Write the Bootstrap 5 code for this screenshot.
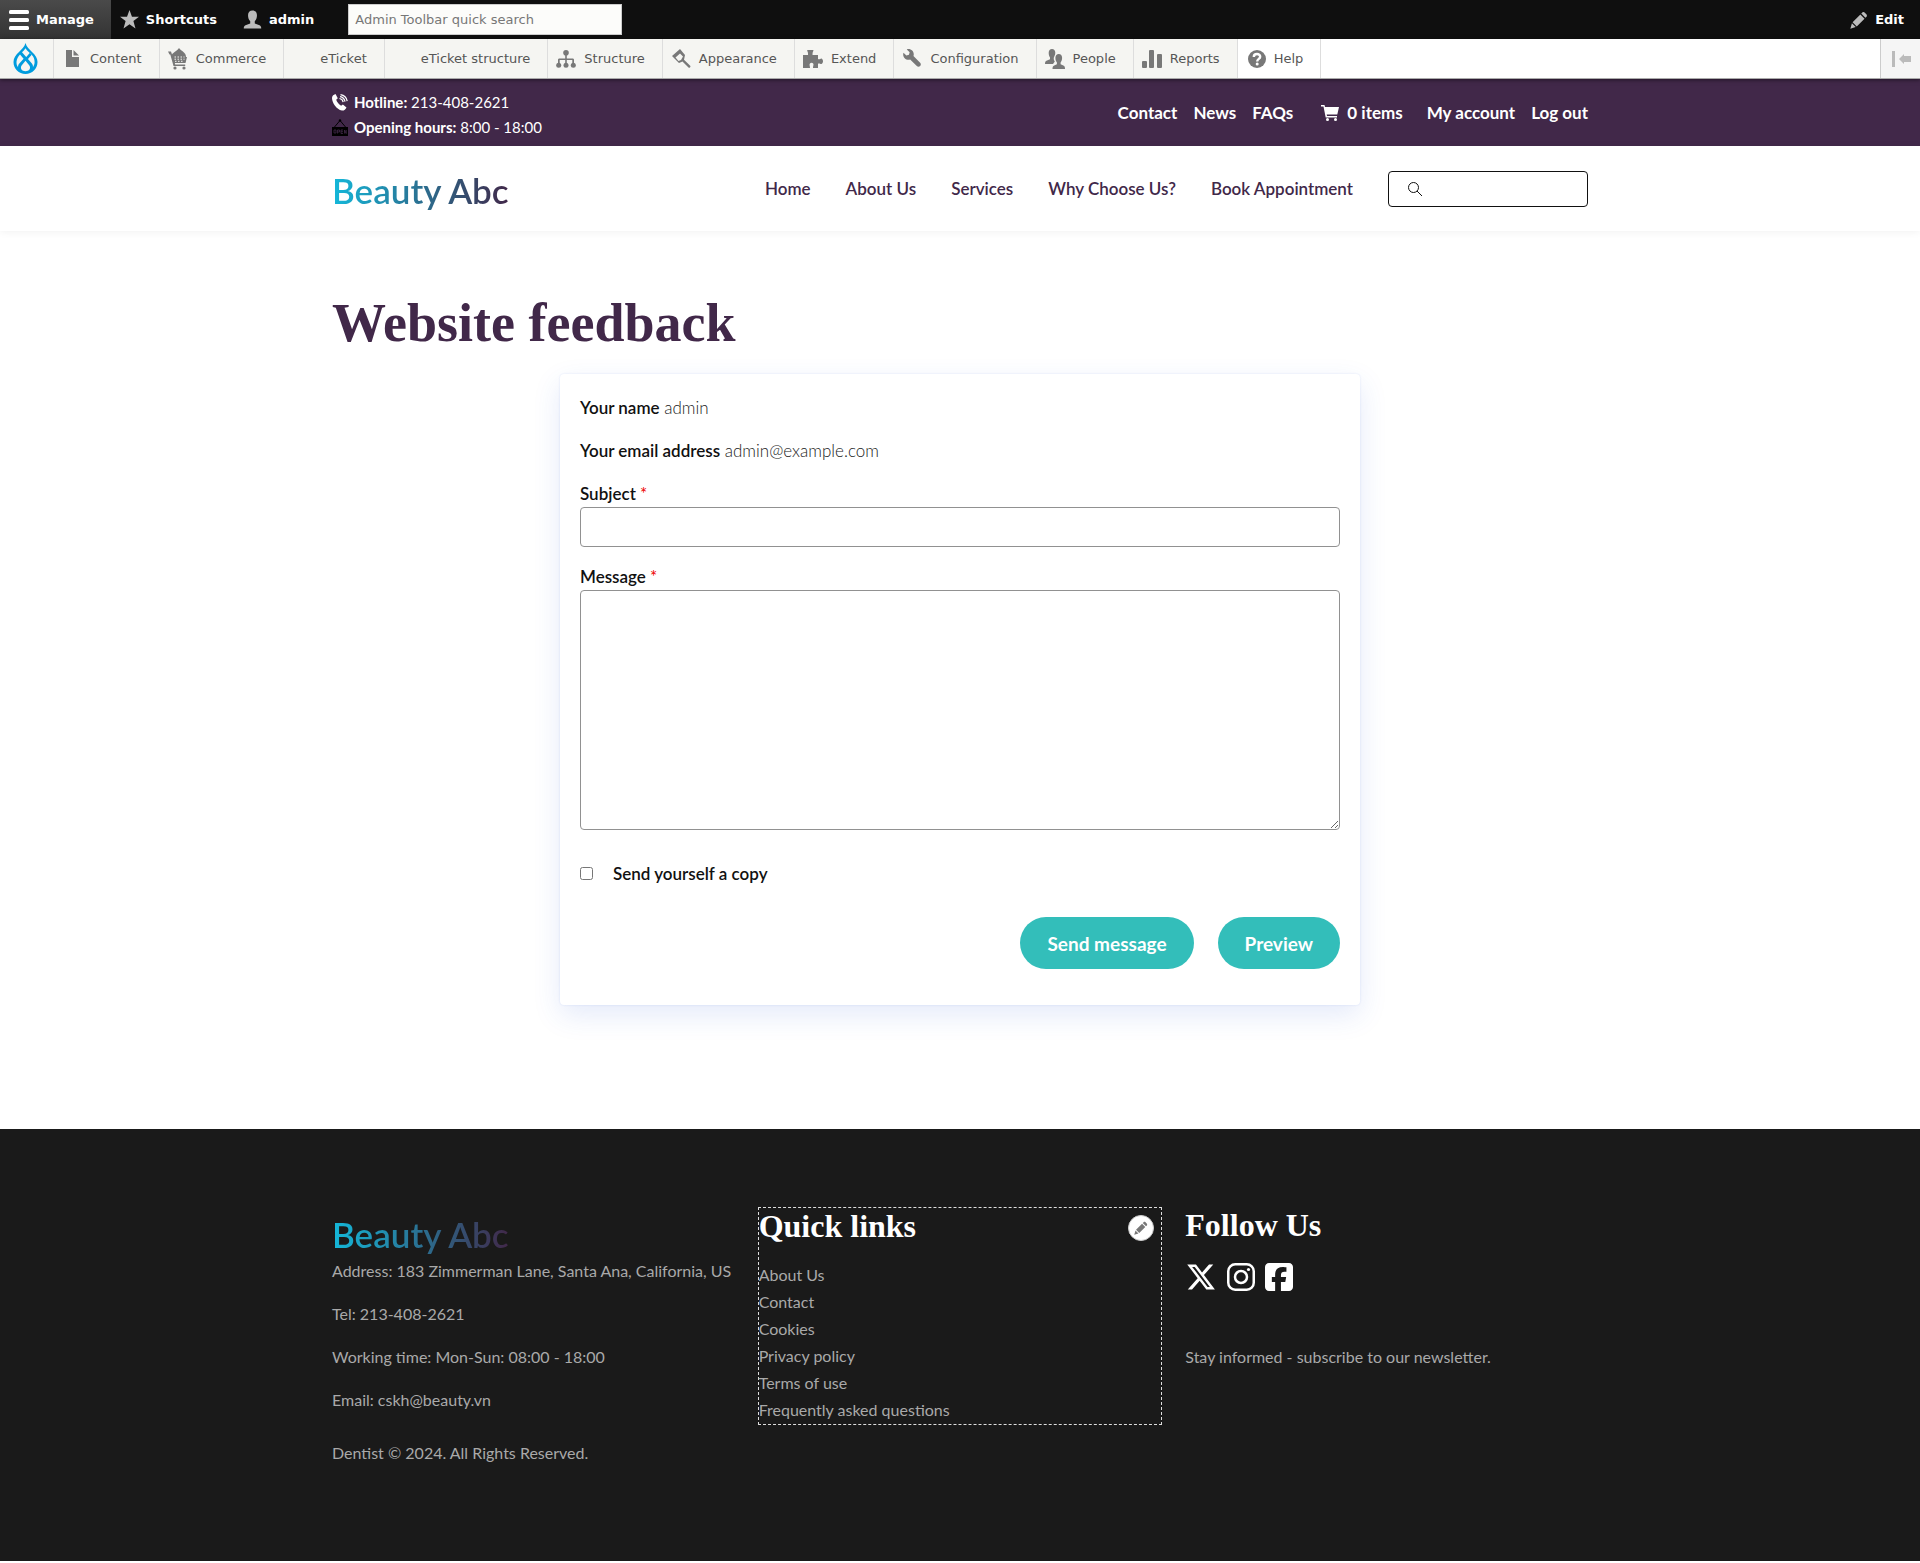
<!DOCTYPE html>
<html lang="en">
<head>
<meta charset="utf-8">
<meta name="viewport" content="width=device-width, initial-scale=1">
<title>Website feedback | Beauty Abc</title>
<link rel="stylesheet" href="https://cdn.jsdelivr.net/npm/bootstrap@5.3.0/dist/css/bootstrap.min.css">
<style>
:root { --plum: #412849; --teal: #33beba; }
body { font-family: Lato, "Open Sans", sans-serif; font-size: 16px; line-height: 27px; color: #1a1a1a; background: #fff; }
a { text-decoration: none; color: inherit; }
svg { display: block; flex: none; }
.site-width { max-width: 1280px; }

/* admin bar */
.admin-bar { background: #0f0f0f; color: #fff; height: 39px; font: bold 13px/39px "DejaVu Sans", sans-serif; }
.admin-bar a { display: flex; align-items: center; gap: 7px; color: #fff; height: 39px; }
.admin-bar .ic { fill: #bbb; }
.admin-bar .tab-manage { background: linear-gradient(#4a4a4a, #333); padding: 0 17px 0 9px; }
.admin-bar .tab-manage svg { fill: #fff; }
.admin-bar .tab-short { padding: 0 14px 0 9px; }
.admin-bar .tab-user { padding: 0 12px; }
.admin-find { width: 274px; height: 31px; margin-left: 22px; border: 1px solid #ccc; border-radius: 0; padding: 0 6px; background: #fcfcfa; font: 13px "DejaVu Sans", sans-serif; }
.admin-find::placeholder { color: #777; opacity: 1; }
.admin-tray { position: relative; z-index: 2; height: 40px; background: #fff; border-bottom: 1px solid #aaa; box-shadow: 0 1px 4px rgba(0,0,0,.5); font: 13px/39px "DejaVu Sans", sans-serif; }
.admin-tray a { display: flex; align-items: center; height: 39px; padding: 0 17px 0 8px; gap: 8px; color: #565656; background: #f5f5f2; border-right: 1px solid #ddd; }
.admin-tray a.tray-logo { padding: 0 15px 0 13px; }
.admin-tray a.no-ic { padding-left: 36px; }
.admin-tray a.on-white { background: #fff; }
.admin-tray svg { fill: #787878; }
.tray-flip { width: 40px; background: #f5f5f5; border: 0; border-left: 1px solid #ccc; padding: 0 0 0 11px; }
.tray-flip svg { fill: #bbb; }

/* site header */
.top-strip { background: var(--plum); color: #fff; height: 67px; font-size: 15px; line-height: 25px; }
.top-links a { font-weight: 700; font-size: 17px; color: #fff; }
.top-lines > div { display: flex; align-items: center; gap: 6px; }
.main-nav { height: 85px; box-shadow: 0 1px 8px rgba(0,0,0,.06); }
.main-nav .nav-items { gap: 35px; }
.main-nav .nav-items a { color: var(--plum); font-weight: 600; font-size: 17px; }
.brand { display: block; width: fit-content; font-size: 35px; line-height: 44px; font-weight: 600; color: transparent; background: linear-gradient(90deg, #14b8da, #412849); -webkit-background-clip: text; background-clip: text; }
.main-nav .brand { padding-top: 3px; }
.site-find { width: 200px; height: 36px; border: 1px solid #111; border-radius: 4px; padding-left: 18px; }
.site-find input { border: 0; outline: 0; min-width: 0; background: transparent; }

h1, h2 { font-family: "Liberation Serif", serif; font-weight: 700; }
h1 { font-size: 54px; line-height: 68px; color: var(--plum); margin: 0; }
.page-main { padding-top: 58px; padding-bottom: 124px; }

/* feedback form */
.feedback { max-width: 800px; margin: 17px auto 0; padding: 20px 20px 36px; background: #fff; border-radius: 4px; font-size: 17px; box-shadow: 0 0 2px rgba(50,90,220,.15), 0 10px 28px rgba(50,90,220,.13); }
.feedback p { margin-bottom: 16px; color: #222; font-weight: 300; }
.feedback b, .feedback label { font-weight: 600; color: #111; }
.feedback label { display: block; line-height: 27px; }
.feedback .req { color: #e00; font-weight: 400; }
.feedback .field { display: block; width: 100%; border: 1px solid #919191; border-radius: 4px; background: #fff; margin-bottom: 16px; }
.feedback input.field { height: 40px; }
.feedback textarea.field { height: 240px; margin-bottom: 30px; }
.feedback .copy-row { gap: 20px; margin-bottom: 30px; }
.feedback .copy-row input { width: 13px; height: 13px; }
.pill { border: 0; border-radius: 26px; height: 52px; padding: 0 27px; background: var(--teal); color: #fff; font-weight: 700; font-size: 19px; }

/* footer */
.site-footer { background: #1a1a1a; color: #a9a9a9; padding: 78px 0 95px; }
.site-footer .brand { margin: 5px 0 1px; }
.site-footer p { margin-bottom: 16px; }
.site-footer .last-line { margin-top: 26px; }
.site-footer h2 { font-size: 32px; line-height: 36px; color: #fff; margin: 0; }
.quick { position: relative; border: 1px dashed #ddd; margin: 0 -1px; padding-bottom: 1px; }
.quick ul { margin: 17px 0 0; }
.quick-edit { position: absolute; right: 7px; top: 7px; width: 26px; height: 26px; border: 1px solid #ccc; border-radius: 50%; background: #fff; padding: 0 0 0 5px; }
.socials { margin: 20px 0 52px; gap: 10px; }
</style>
<script src="https://cdn.jsdelivr.net/npm/bootstrap@5.3.0/dist/js/bootstrap.bundle.min.js"></script>
</head>
<body>
<nav class="admin-bar d-flex align-items-center" aria-label="Administration">
  <a class="tab-manage" href="#"><svg width="20" height="20" viewBox="0 0 20 20"><rect y="0" width="20" height="4" rx="1.500"/><rect y="8" width="20" height="4" rx="1.500"/><rect y="16" width="20" height="4" rx="1.500"/></svg>Manage</a>
  <a class="tab-short" href="#"><svg class="ic" width="19" height="19" viewBox="0 0 20 20"><path d="M10 0l2.600 7H20l-5.900 4.700L16.300 19.500 10 15l-6.300 4.500L5.900 11.700 0 7h7.400z"/></svg>Shortcuts</a>
  <a class="tab-user" href="#"><svg class="ic" width="19" height="20" viewBox="0 0 20 20"><path d="M10 0c3 0 4.700 2 4.700 5 0 2.700-.8 4.900-2.300 6.300v2.300l5 2c1.200.5 1.800 1.600 1.800 3.400H.8c0-1.800.6-2.900 1.800-3.400l5-2v-2.300C6.100 9.900 5.300 7.700 5.300 5c0-3 1.700-5 4.700-5z"/></svg>admin</a>
  <input class="admin-find" type="search" aria-label="Admin Toolbar quick search" placeholder="Admin Toolbar quick search">
  <a class="ms-auto pe-3" href="#"><svg class="ic" width="18" height="18" viewBox="0 0 16 16"><path d="M14.500 2.800L13.200 1.500c-.7-.8-1.700-.7-2.200-.2l-1 1L13.700 6l1-1c.5-.6.500-1.500-.2-2.200zM9.200 3.100L2.300 10l3.700 3.700 6.900-6.900zM1.700 10.900L.3 15.700l4.800-1.400z"/></svg>Edit</a>
</nav>
<nav class="admin-tray d-flex" aria-label="Manage menu">
  <a class="tray-logo" href="#" aria-label="Drupal"><svg width="25" height="31" viewBox="0 0 25 31"><path style="fill:#009cde" d="M12.500 0c1 4.200 4 6.300 6.500 9 3.300 3.200 5.500 6 5.500 10 0 6.700-5.300 12-12 12s-12-5.300-12-12c0-4 2.200-6.800 5.500-10 2.500-2.700 5.500-4.800 6.500-9z"/><g style="fill:#f5f5f2"><path d="M12.500 5.200c1.700 2.700 4.200 4.600 6.100 6.600 2 2.100 3 4.400 3 7.200 0 2-.6 3.800-1.700 5.300.200-1.300-.1-2.500-1-3.700L9 9.300c1.300-1.300 2.500-2.500 3.500-4.100z"/><path d="M7 11.500l3.600 4.200-4.500 5c-.8 1.100-1.200 2.300-1 3.600-2.300-3-2.400-8.500 1.900-12.800zM12.500 17.800l3.700 4.500c2.200 3-.2 6-3.700 6s-5.900-3-3.700-6z"/></g><path fill="none" style="fill:none;stroke:#009cde;stroke-width:2.600" d="M17.700 10.800l-5.200 6"/></svg></a>
  <a href="#"><svg width="20" height="17" viewBox="-4 0 20 17"><path d="M0 0h6v7h7v10H0z"/><path d="M7.500 0L13 5.500H7.500z"/></svg>Content</a>
  <a href="#"><svg width="20" height="22" viewBox="0 0 20 22"><path d="M0 3.500h3l1 3C5 4.500 8.500 3.500 11 0c2.500 3.500 7 4 7 9h1l-1.500 6H6.800l.4 1.500h10V18H5.500L2.300 6.500H1.500z"/><circle cx="7" cy="20" r="1.600"/><circle cx="16" cy="20" r="1.600"/><path fill="none" stroke="#f5f5f2" stroke-width="1" stroke-dasharray="1.500 1.500" d="M6.500 9h10M6.500 11.200h10M7 13.300h9"/></svg>Commerce</a>
  <a class="no-ic" href="#">eTicket</a>
  <a class="no-ic" href="#">eTicket structure</a>
  <a href="#"><svg width="20" height="18" viewBox="0 0 20 18"><circle cx="10" cy="2.800" r="2.800"/><path d="M9.200 4h1.600v4.500h5.700c1 0 1.500.5 1.500 1.500V14h-1.700v-4h-5.500v4H9.200v-4H3.700v4H2v-4c0-1 .5-1.500 1.500-1.500h5.700z"/><circle cx="2.700" cy="15.300" r="2.500"/><circle cx="10" cy="15.300" r="2.500"/><circle cx="17.300" cy="15.300" r="2.500"/></svg>Structure</a>
  <a href="#"><svg width="20" height="19" viewBox="-1 0 20 19"><path fill-rule="evenodd" d="M8 0L0 7l7 7 3.500-1.500 6 6c1.200.7 2.500-.6 1.700-1.800l-6.200-6L13 6zM8 4.500L11 7.500 9 11 6.500 12 3.500 8.500z"/></svg>Appearance</a>
  <a href="#"><svg width="20" height="18" viewBox="0 0 20 18"><path d="M4.500 0h5.700c.3 0 .3.500.2.800-.7 1.200-1.100 2.500-.8 4.200H15v4c1.500 1 2.500-.9 3.500-.5 2 1 2 4.500 0 5.500-1 .5-2-1.300-3.500-.3V18h-5c0-2 .8-3.200.3-4.200-.8-1.300-2.700-1.300-3.500 0C6.200 15 7 16 7 18H0V5h5c.2-1.700-.1-3-.8-4.200-.1-.3 0-.8.3-.8z"/></svg>Extend</a>
  <a href="#"><svg width="20" height="19" viewBox="-1 0 17 16"><path d="M14.416 11.586L8.750 5.921c.15-.449.252-.921.252-1.421 0-2.485-2.016-4.500-4.502-4.500-.505 0-.981.102-1.434.255l2.431 2.431-.588 2.196-2.196.588L.268 3.025C.106 3.489 0 3.981 0 4.500 0 6.986 2.014 9 4.500 9c.5 0 .972-.102 1.421-.251l5.667 5.665c.781.781 2.047.781 2.828 0s.781-2.047 0-2.828z"/></svg>Configuration</a>
  <a href="#"><svg width="20" height="20" viewBox="0 0 20 20"><path d="M7 0c2 0 3.300 1.500 3.300 3.800 0 1.200-.3 2.300-.8 3.200-1.300 2-.8 4 .3 5.500L8 15H0c0-2 .4-3 2-3.500l3-1.300V8.500C4.200 7.500 3.700 6 3.700 3.800 3.700 1.500 5 0 7 0z"/><path d="M13.800 5c2 0 3.300 1.500 3.300 3.800 0 2-.6 3.700-1.500 4.700v1.700l2.700 1.200c1.400.6 1.700 1.600 1.700 3.600H7.500c0-2 .4-3 1.700-3.600l2.700-1.200v-1.700c-.9-1-1.500-2.700-1.500-4.700C10.400 6.500 11.800 5 13.800 5z"/></svg>People</a>
  <a href="#"><svg width="20" height="18" viewBox="0 0 20 18"><rect y="11" width="5" height="7" rx="1"/><rect x="7" width="5" height="18" rx="1"/><rect x="15" y="4" width="5" height="14" rx="1"/></svg>Reports</a>
  <a class="on-white" href="#"><svg width="20" height="18" viewBox="-2 0 20 18"><circle cx="9" cy="9" r="9"/><path style="fill:none" stroke="#fff" stroke-width="2.400" d="M5.800 7C5.800 3 12.200 3.200 12.200 6.700 12.200 9 9.200 8.800 9.200 11.500"/><circle cx="9.200" cy="14" r="1.500" style="fill:#fff"/></svg>Help</a>
  <button class="tray-flip ms-auto" type="button" aria-label="Vertical orientation"><svg width="19" height="16" viewBox="0 0 19 16"><rect width="3" height="16"/><path d="M7 8l5-5v2h7v6h-7v2z"/></svg></button>
</nav>

<header>
  <div class="top-strip">
    <div class="container-fluid site-width h-100 d-flex justify-content-between align-items-center">
      <div class="top-lines pt-1">
        <div><svg width="16" height="17" viewBox="0 0 16 17" fill="#fff"><path d="M3.500 0l2.300 4.300-1.600 1.500c.8 2.500 2.500 4.500 4.900 5.900l1.800-1.200 3.600 3c-1 2.200-2.500 3.300-4.600 3.100C4.600 15.300.2 9.400 0 4 0 2 1.300.8 3.500 0z"/><path fill="none" stroke="#fff" stroke-width="1.200" d="M7.500 4.500c2 .3 3.300 1.600 3.700 3.700M8 2.600c2.600.4 4.500 2.300 5 5M8.500.7c3.500.5 6.100 3 6.700 6.500"/></svg><span><b>Hotline:</b> 213-408-2621</span></div>
        <div><svg width="16" height="17" viewBox="0 0 16 17"><path d="M0 8h16v9H0z"/><path fill="none" stroke="#000" d="M2.500 8L8 1.500 13.500 8"/><circle cx="8" cy="1.500" r="1.200"/><path fill="none" stroke="#412849" stroke-width=".8" d="M2 11h2v3H2zM5.500 14.500V11h2v2h-2M11 11H9v3.500h2M9 12.700h2M12.500 14.500V11l1.700 3.500V11"/></svg><span><b>Opening hours:</b> 8:00 - 18:00</span></div>
      </div>
      <nav class="top-links d-flex align-items-center" aria-label="Account">
        <a href="#">Contact</a><a class="ms-3" href="#">News</a><a class="ms-3" href="#">FAQs</a>
        <a class="d-flex align-items-center gap-2 ms-4 ps-1 me-4" href="#"><svg width="18" height="16" viewBox="0 0 18 16" fill="#fff"><path d="M0 0h3.500l.5 2h14l-1.700 7.500H5.700l.3 1.500h10v1.500H4.700L2.500 1.500H0z"/><circle cx="6.500" cy="14.500" r="1.500"/><circle cx="14.500" cy="14.500" r="1.500"/></svg>0 items</a>
        <a href="#">My account</a><a class="ms-3" href="#">Log out</a>
      </nav>
    </div>
  </div>
  <div class="main-nav">
    <div class="container-fluid site-width h-100 d-flex align-items-center justify-content-between">
      <a class="brand" href="#">Beauty Abc</a>
      <nav class="nav-items d-flex align-items-center" aria-label="Main">
        <a href="#">Home</a><a href="#">About Us</a><a href="#">Services</a><a href="#">Why Choose Us?</a><a href="#">Book Appointment</a>
        <form class="site-find d-flex align-items-center gap-2"><label for="find" aria-label="Search"><svg width="16" height="16" viewBox="0 0 16 16" fill="none" stroke="#111"><circle cx="6.500" cy="6.500" r="5"/><path d="M10 10l5 5"/></svg></label><input id="find" type="search"></form>
      </nav>
    </div>
  </div>
</header>

<main class="page-main container-fluid site-width">
  <h1>Website feedback</h1>
  <form class="feedback">
    <p><b>Your name</b> admin</p>
    <p><b>Your email address</b> admin@example.com</p>
    <label for="subject">Subject <span class="req">*</span></label>
    <input class="field" id="subject" type="text">
    <label for="message">Message <span class="req">*</span></label>
    <textarea class="field" id="message"></textarea>
    <div class="copy-row d-flex align-items-center"><input id="copy" type="checkbox"><label for="copy">Send yourself a copy</label></div>
    <div class="d-flex justify-content-end gap-4"><button class="pill" type="button">Send message</button><button class="pill" type="button">Preview</button></div>
  </form>
</main>

<footer class="site-footer">
  <div class="container-fluid site-width">
    <div class="row">
      <div class="col-4">
        <a class="brand" href="#">Beauty Abc</a>
        <p>Address: 183 Zimmerman Lane, Santa Ana, California, US</p>
        <p>Tel: 213-408-2621</p>
        <p>Working time: Mon-Sun: 08:00 - 18:00</p>
        <p>Email: cskh@beauty.vn</p>
        <p class="last-line mb-0">Dentist © 2024. All Rights Reserved.</p>
      </div>
      <div class="col-4">
        <section class="quick">
          <h2>Quick links</h2>
          <button class="quick-edit" type="button" aria-label="Configure block"><svg width="14" height="14" viewBox="0 0 16 16" fill="#787878"><path d="M14.500 2.800L13.200 1.500c-.7-.8-1.700-.7-2.200-.2l-1 1L13.700 6l1-1c.5-.6.500-1.500-.2-2.200zM9.200 3.100L2.300 10l3.700 3.700 6.900-6.900zM1.700 10.900L.3 15.700l4.800-1.400z"/></svg></button>
          <ul class="list-unstyled">
            <li><a href="#">About Us</a></li><li><a href="#">Contact</a></li><li><a href="#">Cookies</a></li><li><a href="#">Privacy policy</a></li><li><a href="#">Terms of use</a></li><li><a href="#">Frequently asked questions</a></li>
          </ul>
        </section>
      </div>
      <div class="col-4">
        <h2>Follow Us</h2>
        <div class="socials d-flex">
          <a href="#" aria-label="X"><svg width="32" height="28" viewBox="-10 32 532 448" fill="#fff"><path d="M389.200 48h70.600L305.600 224.200 487 464H345L233.700 318.600 106.500 464H35.800L200.700 275.500 26.800 48H172.400L272.900 180.900zM364.400 421.800h39.100L151.100 88h-42z"/></svg></a>
          <a href="#" aria-label="Instagram"><svg width="28" height="28" viewBox="0 0 28 28" fill="none" stroke="#fff" stroke-width="2.500"><rect x="1.250" y="1.250" width="25.500" height="25.500" rx="7"/><circle cx="14" cy="14" r="6"/><circle cx="21.500" cy="6.500" r="1.600" fill="#fff" stroke="none"/></svg></a>
          <a href="#" aria-label="Facebook"><svg width="28" height="28" viewBox="0 32 448 448" fill="#fff"><path d="M64 32C28.700 32 0 60.700 0 96V416c0 35.300 28.700 64 64 64h98.200V334.200H109.400V256h52.800V222.300c0-87.100 39.400-127.500 125-127.500c16.200 0 44.200 3.200 55.700 6.400V172c-6-.6-16.500-1-29.600-1c-42 0-58.200 15.900-58.200 57.200V256h83.600l-14.400 78.200H255V480H384c35.300 0 64-28.700 64-64V96c0-35.300-28.700-64-64-64H64z"/></svg></a>
        </div>
        <p class="m-0">Stay informed - subscribe to our newsletter.</p>
      </div>
    </div>
  </div>
</footer>
</body>
</html>
